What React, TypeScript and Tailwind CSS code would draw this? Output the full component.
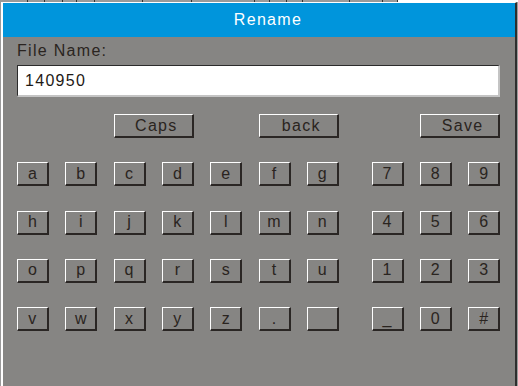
const LETTERS = [
  ["a", "b", "c", "d", "e", "f", "g"],
  ["h", "i", "j", "k", "l", "m", "n"],
  ["o", "p", "q", "r", "s", "t", "u"],
  ["v", "w", "x", "y", "z", ".", ""],
];

const DIGITS = [
  ["7", "8", "9"],
  ["4", "5", "6"],
  ["1", "2", "3"],
  ["_", "0", "#"],
];

// widths of the cells peeking out above the dialog
const STRIP = [28, 17, 18, 14, 18, 48, 49, 63, 15, 17, 16, 47, 33, 15];

function Key({ label, wide = false }: { label: string; wide?: boolean }) {
  return (
    <button
      type="button"
      className={`flex h-[24px] items-center justify-center border-t border-l border-r-2 border-b-2 border-t-white border-l-white border-r-[#2a2624] border-b-[#2a2624] bg-[#868583] text-[16px] leading-[18px] tracking-[1.3px] text-[#2a2420] ${
        wide ? "col-span-2 pl-[6px]" : "pl-[1px]"
      }`}
    >
      {label}
    </button>
  );
}

export default function App() {
  return (
    <div className="relative h-[386px] w-[518px] overflow-hidden bg-[#9a9a9a] font-['Liberation_Sans',Arial,sans-serif]">
      <div className="flex h-[2px]">
        {STRIP.map((w, i) => (
          <div key={i} className="h-full shrink-0 border-r border-r-[#333]" style={{ width: w }} />
        ))}
        <div className="h-full flex-1 bg-white" />
      </div>

      <div className="ml-[1px] flex h-[384px] w-[516px] flex-col border-t border-l-2 border-r-2 border-t-white border-l-white border-r-[#2e2e2e] bg-[#868583]">
        <div className="flex h-[34px] shrink-0 items-center justify-center bg-[#0095dc] pl-[18px] text-[16px] tracking-[1.3px] text-white">
          Rename
        </div>

        <div className="flex flex-col pl-[14px] pt-[5px]">
          <div className="text-[16px] leading-[18px] tracking-[1.3px] text-[#2a2420]">File Name:</div>

          <div className="mt-[5px] flex h-[32px] w-[483px] items-center border-t border-l border-r-2 border-b-2 border-t-[#2b2b2b] border-l-[#2b2b2b] border-r-[#c4c4c4] border-b-[#c4c4c4] bg-white pl-[7px] text-[16px] tracking-[1.3px] text-[#1e1a16]">
            140950
          </div>

          <div className="mt-[17px] grid grid-cols-[repeat(7,32px)_0px_repeat(3,32px)] gap-x-[16.33px] gap-y-[24.25px]">
            <div />
            <div />
            <Key label="Caps" wide />
            <div />
            <Key label="back" wide />
            <div />
            <div />
            <Key label="Save" wide />

            {LETTERS.map((row, r) => [
              ...row.map((l, c) => <Key key={`l${r}${c}`} label={l} />),
              <div key={`s${r}`} />,
              ...DIGITS[r].map((d, c) => <Key key={`d${r}${c}`} label={d} />),
            ])}
          </div>
        </div>
      </div>
    </div>
  );
}
